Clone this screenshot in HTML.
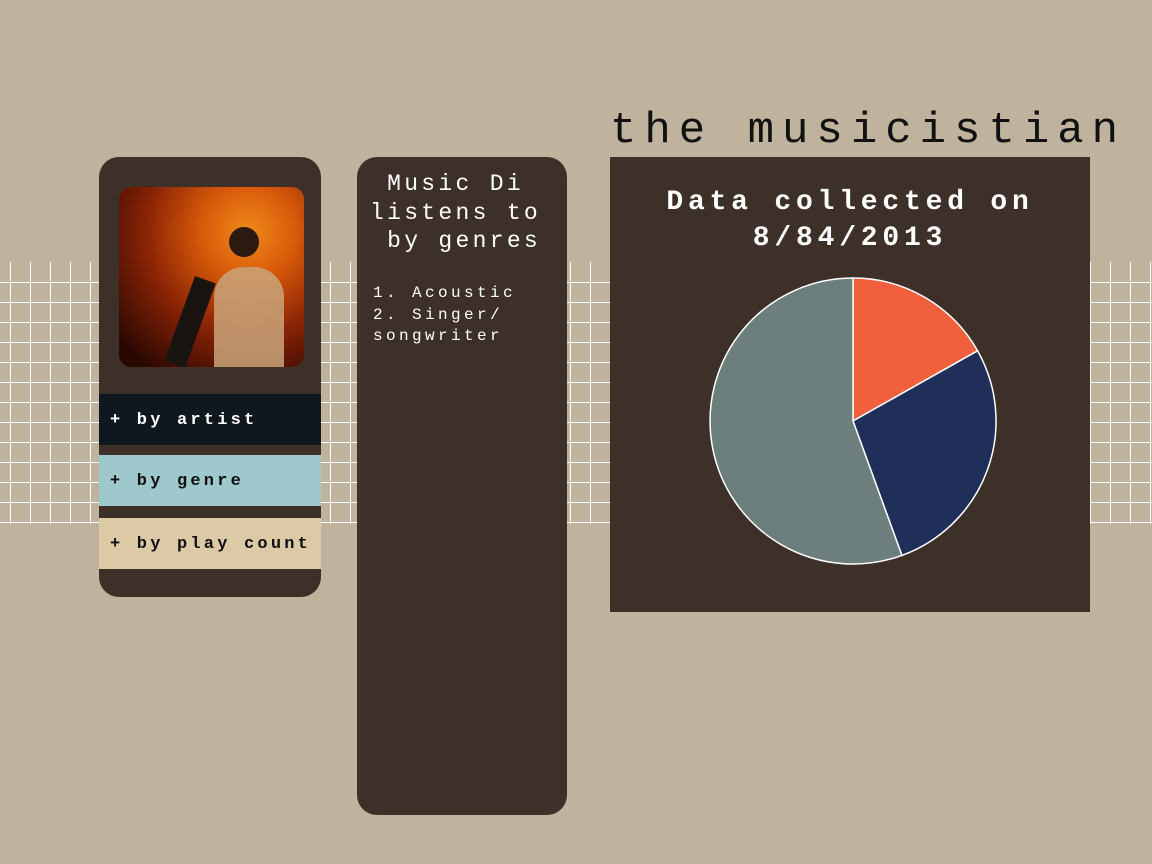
<!DOCTYPE html>
<html><head><style>
body{margin:0;width:1152px;height:864px;background:#bfb39d;position:relative;overflow:hidden;font-family:"Liberation Mono",monospace}
.gv{position:absolute;left:0;top:262px;width:1152px;height:262px;
background-image:linear-gradient(90deg,transparent 10px,#fff 10px,#fff 11px,transparent 11px);background-size:20px 262px}
.h{position:absolute;left:0;width:1152px;height:1px;background:#fff}
.p{position:absolute;background:#3d3028}
.btn{position:absolute;left:99px;width:222px;height:51px;font-weight:bold;font-size:17px;letter-spacing:3.2px;line-height:53px;padding-left:11px;box-sizing:border-box;white-space:nowrap}
</style></head><body>
<div class="gv"></div>
<div class="h" style="top:282px"></div><div class="h" style="top:302px"></div><div class="h" style="top:322px"></div><div class="h" style="top:342px"></div><div class="h" style="top:362px"></div><div class="h" style="top:382px"></div><div class="h" style="top:402px"></div><div class="h" style="top:422px"></div><div class="h" style="top:442px"></div><div class="h" style="top:462px"></div><div class="h" style="top:482px"></div><div class="h" style="top:502px"></div><div class="h" style="top:522px"></div>
<div class="p" style="left:99px;top:157px;width:222px;height:440px;border-radius:20px"></div>
<div style="position:absolute;left:119px;top:187px;width:185px;height:180px;border-radius:12px;overflow:hidden;background:radial-gradient(circle at 70% 25%,#f08a1a 0,#d85a0a 25%,#8a2305 55%,#2a0802 90%)">
<div style="position:absolute;left:95px;top:80px;width:70px;height:100px;background:#c9a47a;border-radius:30px 30px 0 0;opacity:.85"></div>
<div style="position:absolute;left:60px;top:90px;width:22px;height:90px;background:#1a1410;transform:rotate(20deg)"></div>
<div style="position:absolute;left:110px;top:40px;width:30px;height:30px;background:#2a1a10;border-radius:50%"></div>
</div>
<div class="btn" style="top:394px;background:#0f171f;color:#fff">+ by artist</div>
<div class="btn" style="top:455px;background:#9ec8cb;color:#111">+ by genre</div>
<div class="btn" style="top:518px;background:#dccaa7;color:#111">+ by play count</div>
<div class="p" style="left:357px;top:157px;width:210px;height:658px;border-radius:20px"></div>
<div style="position:absolute;left:370px;top:170px;width:190px;color:#fff;font-size:23px;line-height:28.5px;letter-spacing:3.3px;white-space:pre"> Music Di
listens to
 by genres</div>
<div style="position:absolute;left:373px;top:283px;color:#fff;font-size:16px;line-height:21.5px;letter-spacing:3.4px;white-space:pre">1. Acoustic
2. Singer/
songwriter</div>
<div style="position:absolute;left:610px;top:106px;color:#111;font-size:44px;letter-spacing:8px;white-space:nowrap">the musicistian</div>
<div class="p" style="left:610px;top:157px;width:480px;height:455px"></div>
<div style="position:absolute;left:610px;top:185px;width:480px;text-align:center;color:#fff;font-weight:bold;font-size:28px;line-height:36px;letter-spacing:4.8px">Data collected on<br>8/84/2013</div>
<svg style="position:absolute;left:700px;top:268px" width="306" height="306" viewBox="0 0 306 306">
<g transform="translate(153,153)" stroke="#fff" stroke-width="1.5">
<path d="M0 0 L0 -143 A143 143 0 0 1 124.6 -70.2 Z" fill="#f0603d"/>
<path d="M0 0 L124.6 -70.2 A143 143 0 0 1 48.9 134.4 Z" fill="#1f2f5a"/>
<path d="M0 0 L48.9 134.4 A143 143 0 1 1 0 -143 Z" fill="#6c7f7d"/>
</g></svg>
</body></html>
